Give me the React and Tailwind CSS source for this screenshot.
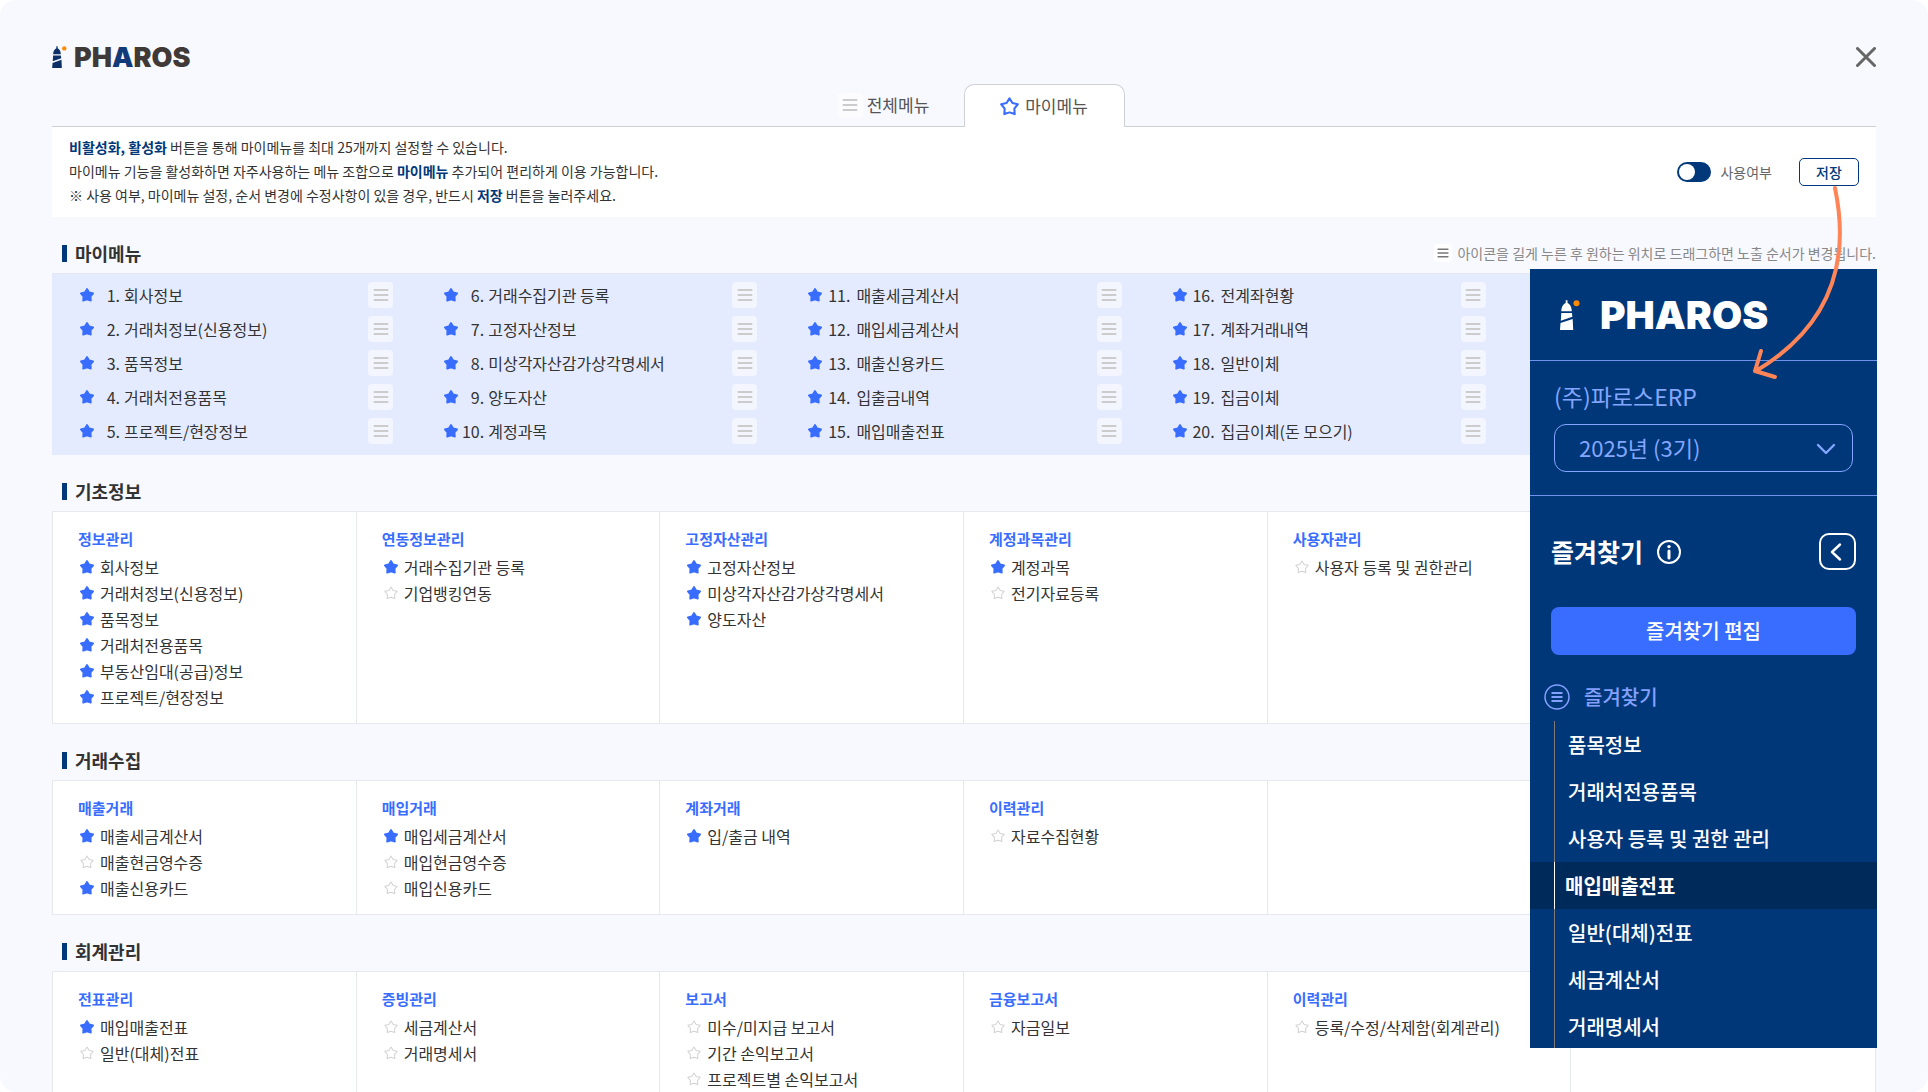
import React, { useState } from "react";

const STAR =
  "M12 2.6 L15.4 8 L21.6 9.4 L17.6 14.4 L18 20.8 L12 18.8 L6 20.8 L6.4 14.4 L2.4 9.4 L8.6 8 Z";

const myMenu = [
  ["회사정보", "거래처정보(신용정보)", "품목정보", "거래처전용품목", "프로젝트/현장정보"],
  ["거래수집기관 등록", "고정자산정보", "미상각자산감가상각명세서", "양도자산", "계정과목"],
  ["매출세금계산서", "매입세금계산서", "매출신용카드", "입출금내역", "매입매출전표"],
  ["전계좌현황", "계좌거래내역", "일반이체", "집금이체", "집금이체(돈 모으기)"],
  [],
];

const sections = [
  {
    title: "기초정보",
    groups: [
      {
        title: "정보관리",
        items: [
          ["회사정보", true],
          ["거래처정보(신용정보)", true],
          ["품목정보", true],
          ["거래처전용품목", true],
          ["부동산임대(공급)정보", true],
          ["프로젝트/현장정보", true],
        ],
      },
      { title: "연동정보관리", items: [["거래수집기관 등록", true], ["기업뱅킹연동", false]] },
      {
        title: "고정자산관리",
        items: [["고정자산정보", true], ["미상각자산감가상각명세서", true], ["양도자산", true]],
      },
      { title: "계정과목관리", items: [["계정과목", true], ["전기자료등록", false]] },
      { title: "사용자관리", items: [["사용자 등록 및 권한관리", false]] },
      null,
    ],
  },
  {
    title: "거래수집",
    groups: [
      {
        title: "매출거래",
        items: [["매출세금계산서", true], ["매출현금영수증", false], ["매출신용카드", true]],
      },
      {
        title: "매입거래",
        items: [["매입세금계산서", true], ["매입현금영수증", false], ["매입신용카드", false]],
      },
      { title: "계좌거래", items: [["입/출금 내역", true]] },
      { title: "이력관리", items: [["자료수집현황", false]] },
      null,
      null,
    ],
  },
  {
    title: "회계관리",
    groups: [
      { title: "전표관리", items: [["매입매출전표", true], ["일반(대체)전표", false]] },
      { title: "증빙관리", items: [["세금계산서", false], ["거래명세서", false]] },
      {
        title: "보고서",
        items: [["미수/미지급 보고서", false], ["기간 손익보고서", false], ["프로젝트별 손익보고서", false]],
      },
      { title: "금융보고서", items: [["자금일보", false]] },
      { title: "이력관리", items: [["등록/수정/삭제함(회계관리)", false]] },
      null,
    ],
  },
];

const favorites = [
  "품목정보",
  "거래처전용품목",
  "사용자 등록 및 권한 관리",
  "매입매출전표",
  "일반(대체)전표",
  "세금계산서",
  "거래명세서",
];

function Star({ filled }) {
  return (
    <svg viewBox="1 1 22 22" className="h-[14px] w-[14px] shrink-0" aria-hidden="true">
      <path
        d={STAR}
        fill={filled ? "#386dff" : "none"}
        stroke={filled ? "#386dff" : "#d2d2d2"}
        strokeWidth={filled ? 2.8 : 1.6}
        strokeLinejoin="round"
      />
    </svg>
  );
}

function Bars({ className, color = "#cccccc" }) {
  return (
    <svg viewBox="0 0 16 16" className={className} aria-hidden="true">
      <path d="M1.5 3h13M1.5 8h13M1.5 13h13" stroke={color} strokeWidth="2" strokeLinecap="round" />
    </svg>
  );
}

function Lighthouse({ className, color }) {
  return (
    <svg viewBox="0 0 20 30" className={className} aria-hidden="true">
      <path
        d="M5.7 0.3h1.8v2.6C10.2 4.4 11.6 6.5 11.8 11.2H1.3C1.5 6.5 3 4.4 5.7 2.9Z M1.3 13.1h10.6l.5 3.6L.8 20.8Z M12.7 18.9 13.2 30H0L.5 23.1Z"
        fill={color}
      />
      <circle cx="16.5" cy="3.3" r="3" fill="#ff8a00" />
    </svg>
  );
}

function SectionHeader({ title, children }) {
  return (
    <div className="flex h-14 items-center pt-4">
      <span className="ml-[10px] h-[17px] w-[5px] bg-[#00387a]" />
      <h2 className="ml-2 text-[18px] leading-6 font-bold text-[#333]">{title}</h2>
      {children}
    </div>
  );
}

function MenuSection({ title, groups }) {
  return (
    <section>
      <SectionHeader title={title} />
      <div className="grid grid-cols-6 border border-[#e5e8ee] bg-white">
        {groups.map((g, i) => (
          <div
            key={i}
            className="border-r border-[#e5e8ee] pt-[15px] pb-[13px] pl-[25px] last:border-r-0"
          >
            {g && (
              <>
                <h3 className="mb-[3px] text-[15px] leading-6 font-bold text-[#386dff]">{g.title}</h3>
                <ul>
                  {g.items.map(([name, on]) => (
                    <li key={name}>
                      <a href="#" className="flex h-[26px] items-center gap-[6px] pl-[2px]">
                        <Star filled={on} />
                        {name}
                      </a>
                    </li>
                  ))}
                </ul>
              </>
            )}
          </div>
        ))}
      </div>
    </section>
  );
}

function Favorites() {
  return (
    <aside className="absolute top-[269px] right-[51px] max-h-[779px] w-[347px] overflow-hidden bg-[#003778] text-[20px] text-white">
      <div className="flex h-[92px] items-center gap-5 border-b border-[#6f92ea] pl-[30px] font-['Inter',sans-serif]">
        <Lighthouse className="h-[30px] w-5" color="#fff" />
        <span className="text-[39px] leading-none font-black">PHAROS</span>
      </div>
      <div className="border-b border-[#6f92ea] px-6 pt-5 pb-[23px] text-[#84a6ff]">
        <p className="text-[23px] leading-[30px]">(주)파로스ERP</p>
        <div className="relative mt-[13px]">
          <select
            aria-label="회계 기수"
            className="h-12 w-full appearance-none rounded-xl border border-[#84a6ff] pb-[2px] pl-6 text-[22px]"
          >
            <option>2025년 (3기)</option>
          </select>
          <svg
            viewBox="0 0 20 12"
            className="pointer-events-none absolute top-[19px] right-[17px] h-3 w-5"
            aria-hidden="true"
          >
            <path
              d="M2 2l8 8 8-8"
              fill="none"
              stroke="#84a6ff"
              strokeWidth="2.4"
              strokeLinecap="round"
              strokeLinejoin="round"
            />
          </svg>
        </div>
      </div>
      <div className="px-[21px] pt-[37px]">
        <div className="flex h-[37px] items-center">
          <h2 className="text-[25px] leading-none font-bold">즐겨찾기</h2>
          <svg viewBox="0 0 24 24" className="ml-[14px] h-6 w-6" aria-hidden="true">
            <circle cx="12" cy="12" r="11" fill="none" stroke="#fff" strokeWidth="2" />
            <path d="M12 11v7" stroke="#fff" strokeWidth="3" strokeLinecap="round" />
            <circle cx="12" cy="6.6" r="1.7" fill="#fff" />
          </svg>
          <button
            aria-label="접기"
            className="ml-auto flex h-[37px] w-[37px] items-center justify-center rounded-[10px] border-2 border-white pr-[3px]"
          >
            <svg viewBox="0 0 12 18" className="h-[18px] w-3" aria-hidden="true">
              <path
                d="M10 1.5L2 9l8 7.5"
                fill="none"
                stroke="#fff"
                strokeWidth="2.4"
                strokeLinecap="round"
                strokeLinejoin="round"
              />
            </svg>
          </button>
        </div>
        <button className="mt-[37px] h-12 w-full rounded-lg bg-[#386dff] font-medium">즐겨찾기 편집</button>
      </div>
      <div className="mt-[18px] flex h-12 items-center gap-[14px] pl-[14px] font-medium text-[#84a0ff]">
        <svg viewBox="0 0 26 26" className="h-[26px] w-[26px]" aria-hidden="true">
          <circle cx="13" cy="13" r="12" fill="none" stroke="currentColor" strokeWidth="1.5" />
          <path d="M7.5 9h11M7.5 13h11M7.5 17h11" stroke="currentColor" strokeWidth="1.8" />
        </svg>
        즐겨찾기
      </div>
      <ul>
        {favorites.map((name) => {
          const active = name === "매입매출전표";
          return (
            <li key={name} className={active ? "bg-[#002a5a] pl-6" : "pl-6"}>
              <a
                href="#"
                className={
                  active
                    ? "flex h-[47px] items-center border-l border-white pl-[10px] font-bold"
                    : "flex h-[47px] items-center border-l border-[#7d7a78] pl-[13px] font-medium"
                }
              >
                {name}
              </a>
            </li>
          );
        })}
      </ul>
    </aside>
  );
}

export default function App() {
  const [enabled, setEnabled] = useState(false);
  return (
    <div className="relative h-screen overflow-hidden rounded-2xl bg-[#f8f9ff] px-[52px] font-['Noto_Sans_CJK_KR',sans-serif] text-[16px] text-[#333]">
      <header className="flex h-[84px] items-center justify-between pt-[30px]">
        <div className="flex items-center gap-[7px] font-['Inter',sans-serif]">
          <Lighthouse className="h-[22px] w-[15px]" color="#0c2f66" />
          <span className="text-[27px] leading-none font-black text-[#3f3a37]">
            PH<span className="text-[#123a78]">A</span>ROS
          </span>
        </div>
        <button aria-label="닫기">
          <svg viewBox="0 0 20 20" className="h-5 w-5" aria-hidden="true">
            <path d="M1.5 1.5l17 17M18.5 1.5l-17 17" stroke="#666" strokeWidth="3" strokeLinecap="round" />
          </svg>
        </button>
      </header>

      <div role="tablist" className="flex justify-center border-b border-[#cfd0d4] text-[17px] text-[#555]">
        <button role="tab" aria-selected="false" className="flex h-[42px] w-40 items-center justify-center gap-1">
          <span className="flex h-[25px] w-[25px] items-center justify-center rounded-sm bg-[#fcfcfe]">
            <Bars className="h-4 w-4" />
          </span>
          전체메뉴
        </button>
        <button
          role="tab"
          aria-selected="true"
          className="-mb-px flex h-[43px] w-[161px] items-center justify-center gap-[6px] rounded-t-[10px] border border-b-0 border-[#cfd0d4] bg-white"
        >
          <svg viewBox="1 1 22 22" className="h-[19px] w-[19px]" aria-hidden="true">
            <path d={STAR} fill="none" stroke="#386dff" strokeWidth="2.4" strokeLinejoin="round" />
          </svg>
          마이메뉴
        </button>
      </div>

      <div className="flex items-center justify-between bg-white pt-2 pr-[17px] pb-[10px] pl-[17px] text-[14px]">
        <div className="leading-6">
          <p>
            <strong className="text-[#00387a]">비활성화, 활성화</strong> 버튼을 통해 마이메뉴를 최대 25개까지 설정할 수
            있습니다.
          </p>
          <p>
            마이메뉴 기능을 활성화하면 자주사용하는 메뉴 조합으로 <strong className="text-[#00387a]">마이메뉴</strong>{" "}
            추가되어 편리하게 이용 가능합니다.
          </p>
          <p>
            ※ 사용 여부, 마이메뉴 설정, 순서 변경에 수정사항이 있을 경우, 반드시{" "}
            <strong className="text-[#00387a]">저장</strong> 버튼을 눌러주세요.
          </p>
        </div>
        <div className="flex items-center pt-[2px]">
          <label className="flex items-center gap-[9px] text-[#666]">
            <input
              type="checkbox"
              role="switch"
              checked={enabled}
              onChange={(e) => setEnabled(e.target.checked)}
              className="h-5 w-[34px] appearance-none rounded-full bg-[#00387a] p-[2px] before:block before:h-4 before:w-4 before:rounded-full before:bg-white checked:before:ml-auto"
            />
            사용여부
          </label>
          <button className="ml-[27px] h-7 w-[60px] rounded-[5px] border border-[#00387a] font-medium text-[#00387a]">
            저장
          </button>
        </div>
      </div>

      <section>
        <SectionHeader title="마이메뉴">
          <p className="ml-auto flex items-center gap-[5px] text-[14px] text-[#888]">
            <span className="flex h-[18px] w-[18px] items-center justify-center rounded-sm bg-white">
              <Bars className="h-3 w-3" color="#777" />
            </span>
            아이콘을 길게 누른 후 원하는 위치로 드래그하면 노출 순서가 변경됩니다.
          </p>
        </SectionHeader>
        <div className="grid grid-cols-5 border-t border-[#e5e8f2] bg-[#e5ebff] pt-2 pr-[3px] pb-[11px]">
          {myMenu.map((col, c) => (
            <ol key={c} className="flex flex-col gap-2 pr-[23px] pl-7">
              {col.map((name, r) => (
                <li key={name} className="flex h-[26px] items-center">
                  <Star filled />
                  <span className={c > 1 ? "mr-[6px] w-7 text-right" : "mr-1 w-[26px] text-right"}>
                    {c * 5 + r + 1}.
                  </span>
                  <span>{name}</span>
                  <button
                    aria-label={name + " 순서 변경"}
                    className="ml-auto flex h-[26px] w-[25px] items-center justify-center rounded-sm bg-[#f3f5ff]"
                  >
                    <Bars className="h-4 w-4" />
                  </button>
                </li>
              ))}
            </ol>
          ))}
        </div>
      </section>

      {sections.map((s) => (
        <MenuSection key={s.title} {...s} />
      ))}

      <Favorites />

      <svg
        viewBox="1740 180 110 204"
        className="pointer-events-none absolute top-[180px] right-[78px] h-[204px] w-[110px]"
        aria-hidden="true"
      >
        <path
          d="M1835 188C1850 260 1833 325 1756 371M1761 351L1755 371L1775 377"
          fill="none"
          stroke="#ff8558"
          strokeWidth="4"
          strokeLinecap="round"
          strokeLinejoin="round"
        />
      </svg>
    </div>
  );
}
